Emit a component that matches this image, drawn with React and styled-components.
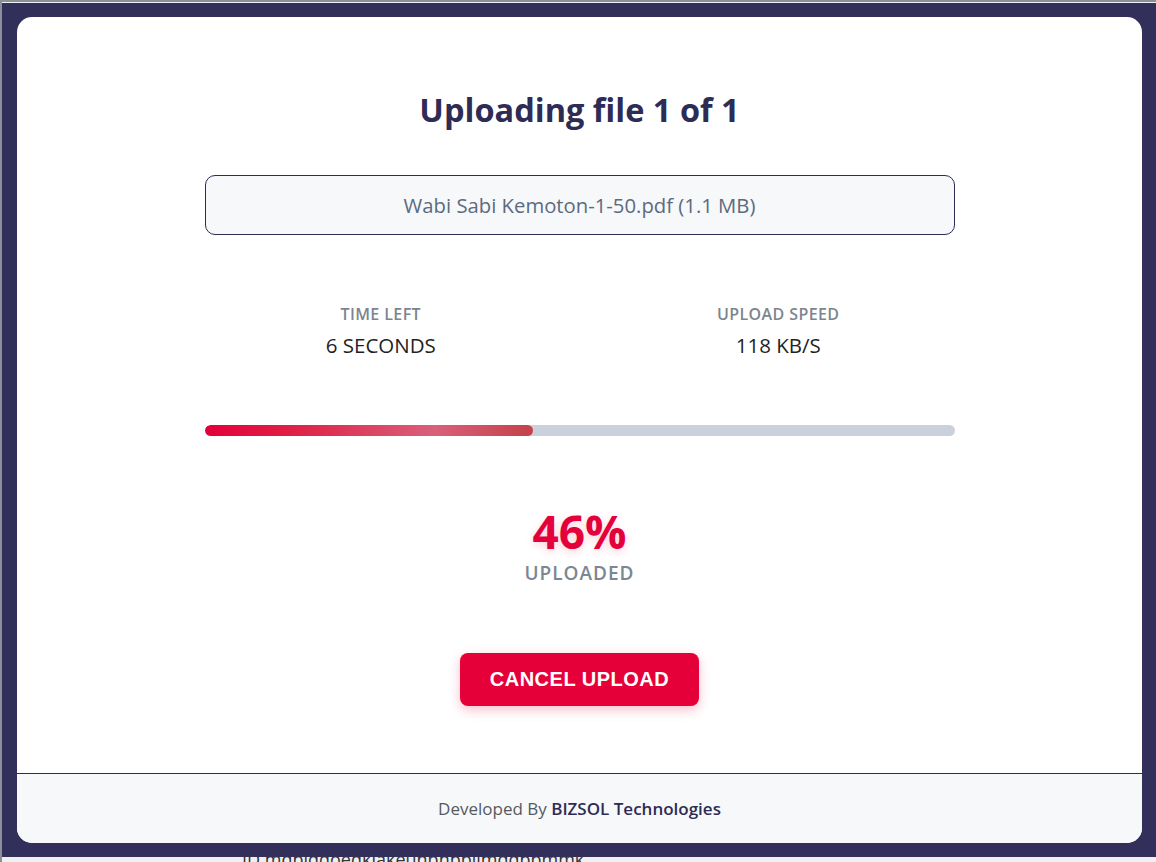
import React from 'react';
import styled, { createGlobalStyle } from 'styled-components';

const GlobalStyle = createGlobalStyle`
    * {
        box-sizing: border-box;
    }
    html, body {
        margin: 0;
        padding: 0;
        height: 100%;
    }
    body {
        background-color: #eef0f2;
        font-family: 'Open Sans', 'Noto Sans', sans-serif;
        overflow: hidden;
    }
`

const Page = styled.div`
    height: 862px;
    border-top: 2px solid #8a9099;
    border-left: 2px solid #8a9099;
    position: relative;
`

const BackgroundLine = styled.div`
    position: absolute;
    left: 240px;
    top: 846px;
    font-family: 'Open Sans', sans-serif;
    font-size: 18px;
    line-height: 22px;
    color: #333;
`

const Overlay = styled.div`
    position: fixed;
    top: 3px;
    left: 2px;
    right: 0;
    bottom: 5px;
    padding: 14px 14px 14px 15px;
    background-color: #32305a;
    display: flex;
    z-index: 2;
`

const Modal = styled.div`
    flex: 1;
    background-color: #ffffff;
    border-radius: 15px;
    display: flex;
    flex-direction: column;
    overflow: hidden;
`

const Body = styled.div`
    flex: 1;
    display: flex;
    flex-direction: column;
    align-items: center;
    padding-top: 73px;
`

const Title = styled.h1`
    margin: 0;
    font-size: 32.5px;
    line-height: 40px;
    font-weight: 700;
    color: #2e2c54;
`

const FileBox = styled.div`
    margin-top: 45px;
    width: 750px;
    height: 60px;
    border: 1px solid #2e2c54;
    border-radius: 10px;
    background-color: #f7f8fa;
    display: flex;
    justify-content: center;
    align-items: center;
    font-size: 20.3px;
    color: #5b6b80;
`

const Stats = styled.div`
    margin-top: 69px;
    width: 795px;
    display: grid;
    grid-template-columns: 1fr 1fr;
`

const Stat = styled.div`
    display: flex;
    flex-direction: column;
    align-items: center;
    gap: 8px;
`

const StatLabel = styled.span`
    font-size: 16px;
    line-height: 20px;
    font-weight: 600;
    color: #7c858e;
    letter-spacing: 0.4px;
`

const StatValue = styled.span`
    font-size: 20.5px;
    line-height: 26px;
    font-weight: 500;
    color: #1f1f24;
`

const Track = styled.div`
    margin-top: 67px;
    width: 750px;
    height: 11px;
    border-radius: 6px;
    background-color: #cbd1dc;
    overflow: hidden;
`

const Fill = styled.div`
    height: 100%;
    border-radius: 6px;
    background: linear-gradient(90deg, #e4003a 0%, #df1e45 25%, #d9607a 70%, #c3424a 100%);
`

const Percent = styled.div`
    margin-top: 71px;
    font-size: 46px;
    line-height: 48px;
    font-weight: 700;
    color: #e4003a;
    text-shadow: 0 3px 8px rgba(228, 0, 58, 0.18);
`

const PercentLabel = styled.div`
    margin-top: 6px;
    font-size: 19px;
    line-height: 24px;
    font-weight: 600;
    color: #7b8792;
    letter-spacing: 1px;
`

const CancelButton = styled.button`
    margin-top: 68px;
    width: 239px;
    height: 53px;
    border: none;
    border-radius: 8px;
    background-color: #e6003a;
    color: #ffffff;
    font-family: 'Liberation Sans', Arial, sans-serif;
    font-size: 20px;
    font-weight: 700;
    letter-spacing: 0.5px;
    cursor: pointer;
    box-shadow: 0 4px 12px rgba(230, 0, 58, 0.25);
`

const Footer = styled.div`
    height: 70px;
    border-top: 1px solid #2e2c54;
    background-color: #f7f8fa;
    display: flex;
    justify-content: center;
    align-items: center;
    font-size: 17px;
    color: #555a60;
    b {
        font-weight: 600;
        color: #2e2c54;
    }
`

const App = () => {
    const progress = 43.8;

    return (
        <>
            <GlobalStyle />
            <Page>
                <BackgroundLine>ID mdblqqoeqkiakeunpnbpllmdqbpmmk</BackgroundLine>
                <Overlay>
                    <Modal>
                        <Body>
                            <Title>Uploading file 1 of 1</Title>
                            <FileBox>Wabi Sabi Kemoton-1-50.pdf (1.1 MB)</FileBox>
                            <Stats>
                                <Stat>
                                    <StatLabel>TIME LEFT</StatLabel>
                                    <StatValue>6 SECONDS</StatValue>
                                </Stat>
                                <Stat>
                                    <StatLabel>UPLOAD SPEED</StatLabel>
                                    <StatValue>118 KB/S</StatValue>
                                </Stat>
                            </Stats>
                            <Track>
                                <Fill style={{ width: `${progress}%` }} />
                            </Track>
                            <Percent>46%</Percent>
                            <PercentLabel>UPLOADED</PercentLabel>
                            <CancelButton>CANCEL UPLOAD</CancelButton>
                        </Body>
                        <Footer>
                            Developed By&nbsp;<b>BIZSOL Technologies</b>
                        </Footer>
                    </Modal>
                </Overlay>
            </Page>
        </>
    )
}

export default App;
